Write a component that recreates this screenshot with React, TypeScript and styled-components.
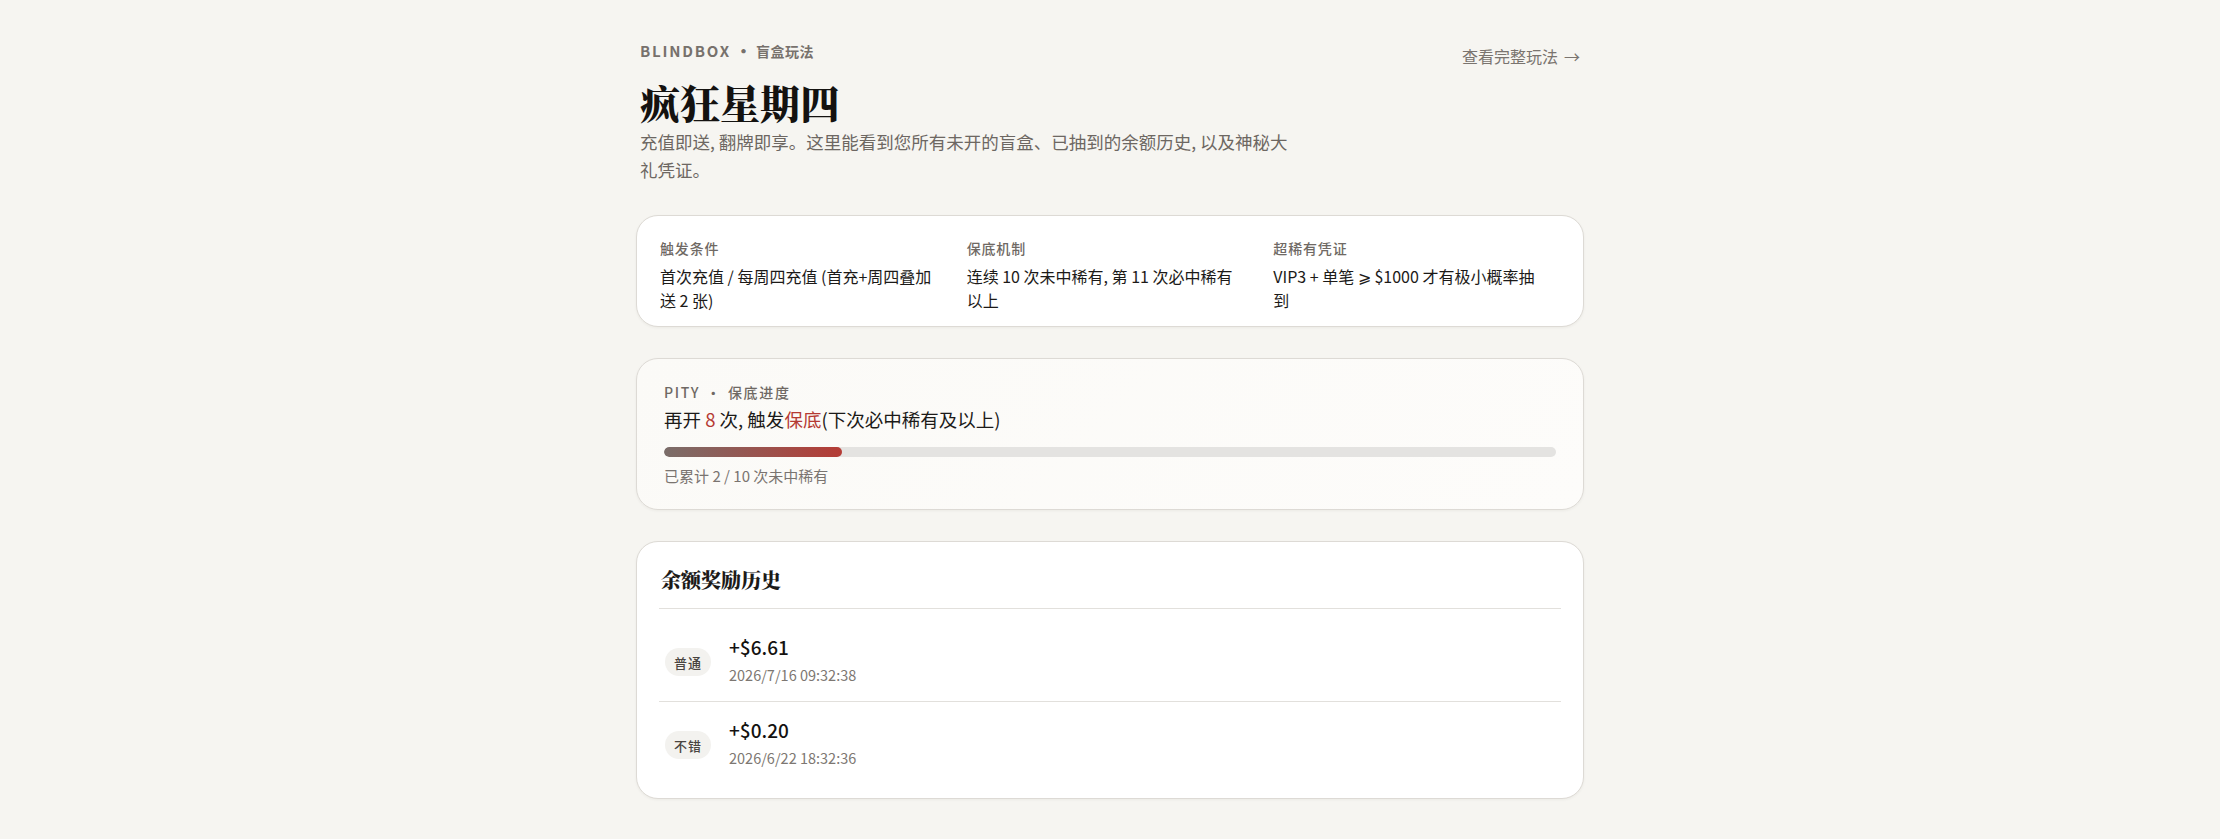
import styled, { createGlobalStyle } from 'styled-components';

const GlobalStyle = createGlobalStyle`
  html, body {
    margin: 0;
    padding: 0;
    background: #f6f5f1;
  }
  body {
    font-family: "Noto Sans CJK SC", "Noto Sans", sans-serif;
    color: #1c1a18;
  }
`;

const Page = styled.main`
  max-width: 948px;
  margin: 0 auto;
  padding: 38px 0 40px;
  display: flex;
  flex-direction: column;
  gap: 31px;
`;

const Header = styled.header`
  display: flex;
  justify-content: space-between;
  align-items: flex-start;
  padding: 0 4px;
`;

const HeaderText = styled.div`
  display: flex;
  flex-direction: column;
`;

const Eyebrow = styled.div`
  display: flex;
  align-items: center;
  gap: 4px;
  font-size: 15px;
  font-weight: 700;
  letter-spacing: 0.12em;
  color: #77716c;
  line-height: 26px;
`;

const EyebrowSub = styled.span`
  font-size: 14px;
  letter-spacing: 0.04em;
  font-weight: 600;
`;

const Dot = styled.span`
  font-size: 17px;
  letter-spacing: 0;
`;

const Title = styled.h1`
  margin: 12px 0 0;
  font-family: "Noto Serif CJK SC", "Source Han Serif SC", "Noto Sans CJK SC", serif;
  font-size: 40px;
  font-weight: 900;
  line-height: 52px;
  color: #141210;
`;

const Lead = styled.p`
  margin: 0;
  max-width: 655px;
  font-size: 17.5px;
  line-height: 28px;
  color: #6d6762;
`;

const MoreLink = styled.a`
  margin-top: 6px;
  font-size: 16px;
  color: #7a746f;
  text-decoration: none;
  display: flex;
  align-items: center;
  gap: 6px;
`;

const Card = styled.section<{ $soft?: boolean }>`
  background: ${(p) =>
    p.$soft ? 'linear-gradient(135deg, #fbfaf7 0%, #fdfcfa 100%)' : '#ffffff'};
  border: 1px solid #dddad5;
  border-radius: 22px;
  box-shadow: 0 1px 3px rgba(40, 30, 20, 0.05);
`;

const RuleCard = styled(Card)`
  padding: 20px 24px 14px 23px;
  display: grid;
  grid-template-columns: repeat(3, 1fr);
  gap: 21px;
`;

const Rule = styled.div`
  display: flex;
  flex-direction: column;
  gap: 4px;
`;

const Label = styled.div`
  font-size: 14px;
  font-weight: 500;
  letter-spacing: 0.06em;
  color: #6f6964;
  line-height: 24px;
`;

const RuleText = styled.div`
  font-size: 16px;
  line-height: 24px;
  color: #1c1a18;
  padding-right: 12px;
`;

const PityCard = styled(Card)`
  padding: 21px 27px 21px;
  display: flex;
  flex-direction: column;
`;

const PityLabel = styled(Label)`
  display: flex;
  gap: 6px;
  letter-spacing: 0.12em;
`;

const PityText = styled.div`
  margin-top: 1px;
  font-size: 18.5px;
  line-height: 28px;
`;

const Red = styled.span`
  color: #b53a33;
`;

const Track = styled.div`
  margin-top: 14px;
  height: 10px;
  border-radius: 5px;
  background: #e4e3e1;
  overflow: hidden;
`;

const Fill = styled.div`
  height: 100%;
  border-radius: 5px;
  background: linear-gradient(90deg, #7a6d69 0%, #b53c36 100%);
`;

const PityNote = styled.div`
  margin-top: 7px;
  font-size: 15px;
  line-height: 24px;
  color: #7a7470;
`;

const HistoryCard = styled(Card)`
  padding: 23px 22px 14px;
`;

const HistoryTitle = styled.h2`
  margin: 0;
  padding: 0 0 13px 2px;
  font-family: "Noto Serif CJK SC", "Source Han Serif SC", "Noto Sans CJK SC", serif;
  font-size: 20px;
  font-weight: 800;
  line-height: 30px;
  border-bottom: 1px solid #e2e0dc;
`;

const List = styled.div`
  padding-top: 10px;
`;

const Row = styled.div<{ $last?: boolean }>`
  display: flex;
  align-items: center;
  gap: 18px;
  padding: 15px 6px 15px;
  border-bottom: ${(p) => (p.$last ? 'none' : '1px solid #e2e0dc')};
`;

const Badge = styled.span`
  width: 46px;
  height: 28px;
  margin-top: 4px;
  border-radius: 14px;
  background: #f3f2ef;
  display: flex;
  align-items: center;
  justify-content: center;
  font-size: 13px;
  font-weight: 500;
  letter-spacing: 0.08em;
  color: #4a4541;
`;

const RowBody = styled.div`
  display: flex;
  flex-direction: column;
  gap: 4px;
`;

const Amount = styled.div`
  font-size: 19px;
  font-weight: 500;
  line-height: 26px;
  color: #141210;
`;

const Time = styled.div`
  font-size: 14.5px;
  line-height: 22px;
  color: #7d7772;
`;

const rules = [
  { label: '触发条件', text: '首次充值 / 每周四充值 (首充+周四叠加送 2 张)' },
  { label: '保底机制', text: '连续 10 次未中稀有, 第 11 次必中稀有以上' },
  { label: '超稀有凭证', text: 'VIP3 + 单笔 ⩾ $1000 才有极小概率抽到' },
];

const history = [
  { tier: '普通', amount: '+$6.61', time: '2026/7/16 09:32:38' },
  { tier: '不错', amount: '+$0.20', time: '2026/6/22 18:32:36' },
];

const App = () => {
  const count = 2;
  const total = 10;
  return (
    <>
      <GlobalStyle />
      <Page>
        <Header>
          <HeaderText>
            <Eyebrow>
              <span>BLINDBOX</span>
              <Dot>•</Dot>
              <EyebrowSub>盲盒玩法</EyebrowSub>
            </Eyebrow>
            <Title>疯狂星期四</Title>
            <Lead>
              充值即送, 翻牌即享。这里能看到您所有未开的盲盒、已抽到的余额历史, 以及神秘大礼凭证。
            </Lead>
          </HeaderText>
          <MoreLink href="#">
            查看完整玩法 <span>→</span>
          </MoreLink>
        </Header>

        <RuleCard>
          {rules.map((r) => (
            <Rule key={r.label}>
              <Label>{r.label}</Label>
              <RuleText>{r.text}</RuleText>
            </Rule>
          ))}
        </RuleCard>

        <PityCard $soft>
          <PityLabel>
            <span>PITY</span>
            <span>·</span>
            <span>保底进度</span>
          </PityLabel>
          <PityText>
            再开 <Red>8</Red> 次, 触发<Red>保底</Red>(下次必中稀有及以上)
          </PityText>
          <Track>
            <Fill style={{ width: `${(count / total) * 100}%` }} />
          </Track>
          <PityNote>
            已累计 {count} / {total} 次未中稀有
          </PityNote>
        </PityCard>

        <HistoryCard>
          <HistoryTitle>余额奖励历史</HistoryTitle>
          <List>
            {history.map((h, i) => (
              <Row key={h.time} $last={i === history.length - 1}>
                <Badge>{h.tier}</Badge>
                <RowBody>
                  <Amount>{h.amount}</Amount>
                  <Time>{h.time}</Time>
                </RowBody>
              </Row>
            ))}
          </List>
        </HistoryCard>
      </Page>
    </>
  );
};

export default App;
